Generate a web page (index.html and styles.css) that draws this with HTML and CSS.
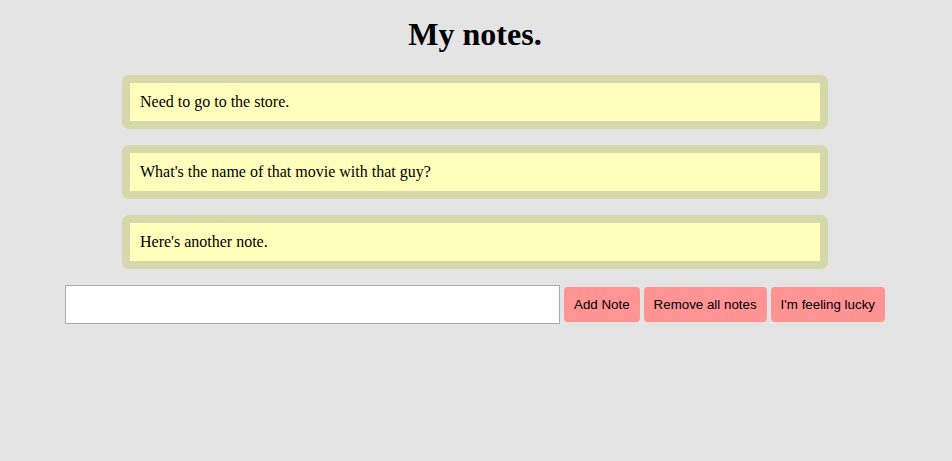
FILE: index.html
```html
<!DOCTYPE html>
<html>
<head>
<meta charset="utf-8">
<link rel="stylesheet" href="styles.css">
</head>
<body>
<h1 class="title">My notes.</h1>
<div class="notes">
  <div class="note"><div class="note-inner">Need to go to the store.</div></div>
  <div class="note"><div class="note-inner">What's the name of that movie with that guy?</div></div>
  <div class="note"><div class="note-inner">Here's another note.</div></div>
</div>
<div class="form">
  <input class="field" type="text">
  <button class="btn">Add Note</button>
  <button class="btn">Remove all notes</button>
  <button class="btn">I'm feeling lucky</button>
</div>
</body>
</html>
```
FILE: styles.css
```css
html, body {
  margin: 0;
  padding: 0;
}
body {
  background: #e4e4e4;
  font-family: "Liberation Serif", "Times New Roman", serif;
  color: #000;
  padding-right: 2px;
}
.title {
  text-align: center;
  font-size: 32px;
  font-weight: bold;
  margin: 16px 0 22px;
  line-height: 37px;
}
.notes {
  display: flex;
  flex-direction: column;
  align-items: center;
  gap: 16px;
}
.note {
  width: 706px;
  box-sizing: border-box;
  background: #d4d8aa;
  border-radius: 7px;
  padding: 8px;
}
.note-inner {
  background: #ffffbb;
  padding: 0 10px;
  height: 38px;
  line-height: 38px;
  font-size: 16px;
}
.form {
  display: flex;
  justify-content: center;
  align-items: center;
  gap: 4px;
  margin-top: 16px;
}
.field {
  width: 495px;
  height: 39px;
  box-sizing: border-box;
  border: 1px solid #a9a9a9;
  background: #fff;
  margin: 0;
}
.btn {
  font-family: "Liberation Sans", Arial, sans-serif;
  font-size: 13.333px;
  background: #ff9494;
  border: none;
  border-radius: 4px;
  height: 35px;
  padding: 0 10px;
  margin: 0;
  color: #000;
}
```
